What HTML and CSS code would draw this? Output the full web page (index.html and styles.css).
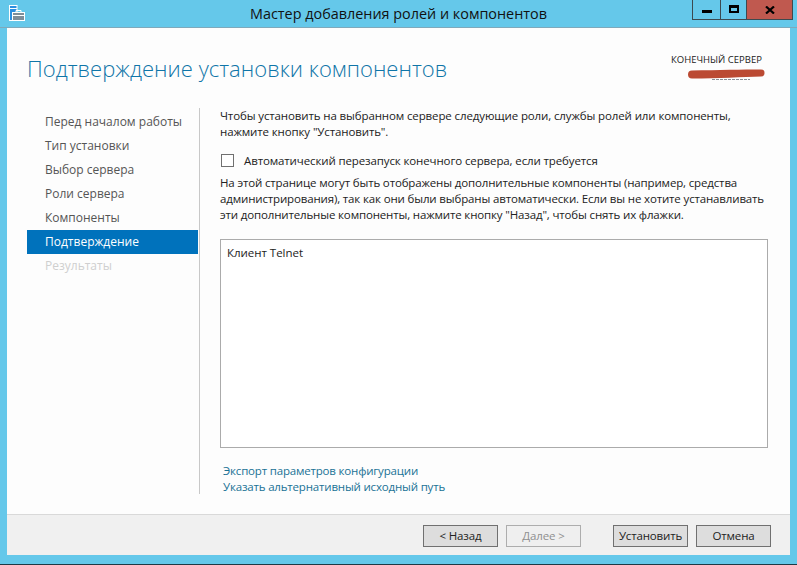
FILE: index.html
```html
<!DOCTYPE html>
<html lang="ru">
<head>
<meta charset="utf-8">
<title>Мастер добавления ролей и компонентов</title>
<link rel="stylesheet" href="styles.css">
</head>
<body>
<div class="window">
  <header class="titlebar">
    <svg class="appicon" width="16" height="16" viewBox="0 0 16 16">
      <rect x="0.5" y="0.5" width="7.500" height="15" fill="#2b8fe0" stroke="#fff"/>
      <rect x="1" y="3" width="7" height="1" fill="#fff"/>
      <rect x="3.500" y="7.500" width="12" height="8" fill="#7f8d99" stroke="#fff"/>
      <path d="M7 7.500V5.500h5v2" fill="none" stroke="#fff"/>
      <rect x="4" y="10" width="11" height="1" fill="#fff"/>
    </svg>
    <div class="title">Мастер добавления ролей и компонентов</div>
    <div class="caption">
      <div class="capbtn"><span class="glyph-min"></span></div>
      <div class="capbtn"><span class="glyph-max"></span></div>
      <div class="capbtn close"><svg width="10" height="8" viewBox="0 0 10 8"><path d="M1 0.500L9 7.500M9 0.500L1 7.500" stroke="#000" stroke-width="2.200" fill="none"/></svg></div>
    </div>
  </header>
  <div class="client">
    <div class="head">
      <h1>Подтверждение установки компонентов</h1>
      <div class="server">
        <div class="server-label">КОНЕЧНЫЙ СЕРВЕР</div>
        <svg class="scribble" width="77" height="11" viewBox="0 0 77 11">
          <path d="M24 10.500H62" stroke="#8a8f96" stroke-width="1" stroke-dasharray="3 1" fill="none"/>
          <path d="M4 1.500C30 1 55 0.500 73 0.500a3.500 3.500 0 0 1 0 7C55 8 30 9.500 4 9.500a4 4 0 0 1 0-8z" fill="#bb4a33"/>
        </svg>
      </div>
    </div>
    <div class="body">
      <nav class="nav">
        <div class="nav-item">Перед началом работы</div>
        <div class="nav-item">Тип установки</div>
        <div class="nav-item">Выбор сервера</div>
        <div class="nav-item">Роли сервера</div>
        <div class="nav-item">Компоненты</div>
        <div class="nav-item active">Подтверждение</div>
        <div class="nav-item disabled">Результаты</div>
      </nav>
      <main class="content">
        <p class="intro">Чтобы установить на выбранном сервере следующие роли, службы ролей или компоненты,<br>нажмите кнопку "Установить".</p>
        <label class="check"><span class="box"></span><span>Автоматический перезапуск конечного сервера, если требуется</span></label>
        <p class="note">На этой странице могут быть отображены дополнительные компоненты (например, средства<br>администрирования), так как они были выбраны автоматически. Если вы не хотите устанавливать<br>эти дополнительные компоненты, нажмите кнопку "Назад", чтобы снять их флажки.</p>
        <div class="list">Клиент Telnet</div>
        <div class="links">
          <a>Экспорт параметров конфигурации</a>
          <a>Указать альтернативный исходный путь</a>
        </div>
      </main>
    </div>
    <footer class="footer">
      <div class="btn">&lt; Назад</div>
      <div class="btn off">Далее &gt;</div>
      <div class="btn gap">Установить</div>
      <div class="btn">Отмена</div>
    </footer>
  </div>
</div>
</body>
</html>
```
FILE: styles.css
```css
* { box-sizing: border-box; }
html, body { margin: 0; height: 100%; }
body { font-family: "Open Sans", "Noto Sans", sans-serif; font-size: 11.5px; letter-spacing: -0.12px; color: #222; overflow: hidden; }
.window { width: 797px; height: 565px; background: #65c8ea; display: flex; flex-direction: column; padding: 0 7px 9px; border-bottom: 1px solid #1d3a46; }
.titlebar { height: 28px; display: flex; position: relative; flex: none; margin: 0 -7px; border-bottom: 1px solid #7fa9bb; }
.appicon { position: absolute; left: 9px; top: 5px; }
.title { flex: 1; text-align: center; font-size: 14.4px; line-height: 28px; color: #111; letter-spacing: 0; }
.caption { position: absolute; left: 692px; top: 0; display: flex; height: 20px; width: 101px; border: 1px solid #3c4a50; border-top: 0; }
.capbtn { width: 28px; display: flex; align-items: center; justify-content: center; border-right: 1px solid #3c4a50; }
.capbtn + .capbtn { width: 26px; }
.capbtn + .capbtn + .capbtn { flex: 1; width: auto; background: #c0594f; border-right: 0; }
.glyph-min { width: 10px; height: 3px; background: #000; margin-top: 4px; }
.glyph-max { width: 10px; height: 8px; border: 2px solid #000; border-top-width: 3px; margin-top: -1px; }
.client { flex: 1; background: #fdfdfd; display: flex; flex-direction: column; min-height: 0; }
.head { height: 80px; display: flex; justify-content: space-between; padding: 0 25px 0 20px; flex: none; }
h1 { margin: 24px 0 0; font-weight: 300; font-size: 22px; line-height: 32px; color: #0f75a8; letter-spacing: 0.03px; }
.server { margin-top: 25px; position: relative; width: 92px; }
.server-label { font-size: 9.5px; line-height: 14px; color: #222; white-space: nowrap; margin-left: -2px; letter-spacing: 0; }
.scribble { position: absolute; left: 15px; top: 16px; display: block; }
.body { flex: 1; display: flex; min-height: 0; }
.nav { width: 172px; margin-left: 20px; padding-top: 2px; flex: none; }
.nav-item { height: 24px; line-height: 24px; padding-left: 18px; color: #555; font-size: 12px; letter-spacing: 0; margin-right: 1px; }
.nav-item.active { background: #0072bc; color: #fff; }
.nav-item.disabled { color: #cfcfcf; }
.content { flex: 1; border-left: 1px solid #c8c8c8; margin-bottom: 20px; padding: 0 22px 0 20px; display: flex; flex-direction: column; min-width: 0; }
.intro, .note { margin: 0; line-height: 16px; white-space: nowrap; }
.check { display: flex; align-items: center; gap: 11px; margin-top: 13px; height: 16px; }
.box { width: 13px; height: 13px; border: 1px solid #707070; background: #fff; margin-left: 1px; }
.check .box + span { margin-left: -1px; }
.note { margin-top: 7px; letter-spacing: -0.15px; }
.list { height: 209px; margin-top: 16px; border: 1px solid #ababab; background: #fff; padding: 5px 6px; line-height: 16px; flex: none; letter-spacing: -0.03px; }
.links { margin-top: 15px; display: flex; flex-direction: column; padding-left: 3px; color: #1a7295; line-height: 16px; letter-spacing: -0.18px; }
.footer { height: 41px; flex: none; background: #f0f0f0; border-top: 1px solid #d9d9d9; display: flex; gap: 8px; padding: 10px 19px 0 416px; }
.btn { flex: none; width: 75px; height: 22px; border: 1px solid #707070; background: #dddddd; text-align: center; line-height: 20px; color: #222; letter-spacing: -0.15px; }
.btn.off { border-color: #adadad; background: #efefef; color: #8f8f8f; }
.btn.gap { margin-left: 24px; }
```
